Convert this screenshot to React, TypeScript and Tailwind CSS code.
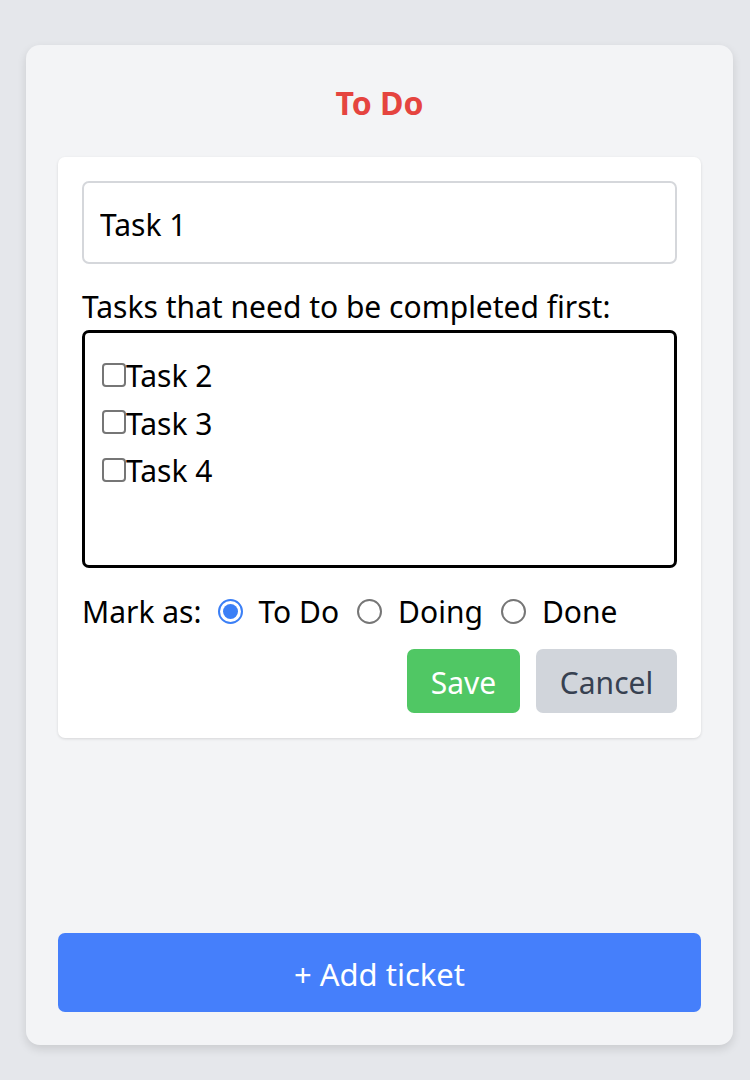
import { useState } from 'react'

const tasks = ['Task 2', 'Task 3', 'Task 4']
const statuses = ['To Do', 'Doing', 'Done']

const Radio = ({ checked }: { checked: boolean }) => (
	<span
		className={
			checked
				? 'flex h-[25px] w-[25px] items-center justify-center rounded-full border-2 border-[#3b7ff6]'
				: 'flex h-[25px] w-[25px] items-center justify-center rounded-full border-2 border-[#767676]'
		}
	>
		{checked && <span className="h-[15px] w-[15px] rounded-full bg-[#3b7ff6]" />}
	</span>
)

export default function App() {
	const [status, setStatus] = useState('To Do')
	const [checked, setChecked] = useState<string[]>([])

	const toggle = (t: string) =>
		setChecked((c) => (c.includes(t) ? c.filter((x) => x !== t) : [...c, t]))

	return (
		<div
			className="min-h-[1080px] bg-[#e5e7eb] pt-[45px] pb-[35px] pl-[26px] pr-[17px]"
			style={{ fontFamily: '"Noto Sans", "Open Sans", sans-serif' }}
		>
			<div className="flex h-[1000px] flex-col rounded-[14px] bg-[#f3f4f6] px-[32px] pt-[38px] pb-[33px] shadow-[0_4px_10px_rgba(0,0,0,0.12)]">
				<h2 className="text-center text-[32px] font-bold leading-[40px] text-[#e5443f]">To Do</h2>

				<div className="mt-[34px] rounded-[7px] bg-white px-[24px] pt-[24px] pb-[25px] shadow-[0_1px_3px_rgba(0,0,0,0.12)]">
					<input
						className="block h-[83px] w-full rounded-[7px] border-2 border-[#d5d7db] px-[16px] pt-[4px] text-[30px] text-black outline-none"
						defaultValue="Task 1"
					/>

					<p className="mt-[22px] text-[30px] leading-[42px] text-black">
						Tasks that need to be completed first:
					</p>

					<div className="mt-[2px] h-[238px] rounded-[7px] border-[3px] border-black px-[17px] pt-[18px]">
						{tasks.map((t) => (
							<label key={t} className="flex h-[47.5px] cursor-pointer items-center text-[30px] text-black">
								<span
									onClick={() => toggle(t)}
									className="h-[24px] w-[24px] shrink-0 rounded-[4px] border-2 border-[#767676] bg-white"
								/>
								<span className="pt-[2px]">{t}</span>
							</label>
						))}
					</div>

					<div className="mt-[22px] flex h-[42px] items-center text-[30px] text-black">
						<span className="mr-[16px]">Mark as:</span>
						{statuses.map((s) => (
							<label
								key={s}
								onClick={() => setStatus(s)}
								className="mr-[18px] flex cursor-pointer items-center gap-[16px]"
							>
								<Radio checked={status === s} />
								<span>{s}</span>
							</label>
						))}
					</div>

					<div className="mt-[17px] flex justify-end gap-[16px]">
						<button className="h-[64px] w-[113px] rounded-[7px] bg-[#50c764] pt-[2px] text-[30px] text-white">Save</button>
						<button className="h-[64px] w-[141px] rounded-[7px] bg-[#d1d5db] pt-[2px] text-[30px] text-[#374151]">
							Cancel
						</button>
					</div>
				</div>

				<button className="mt-auto h-[79px] w-full rounded-[7px] bg-[#457ffb] pt-[3px] text-[31px] text-white">
					+ Add ticket
				</button>
			</div>
		</div>
	)
}
